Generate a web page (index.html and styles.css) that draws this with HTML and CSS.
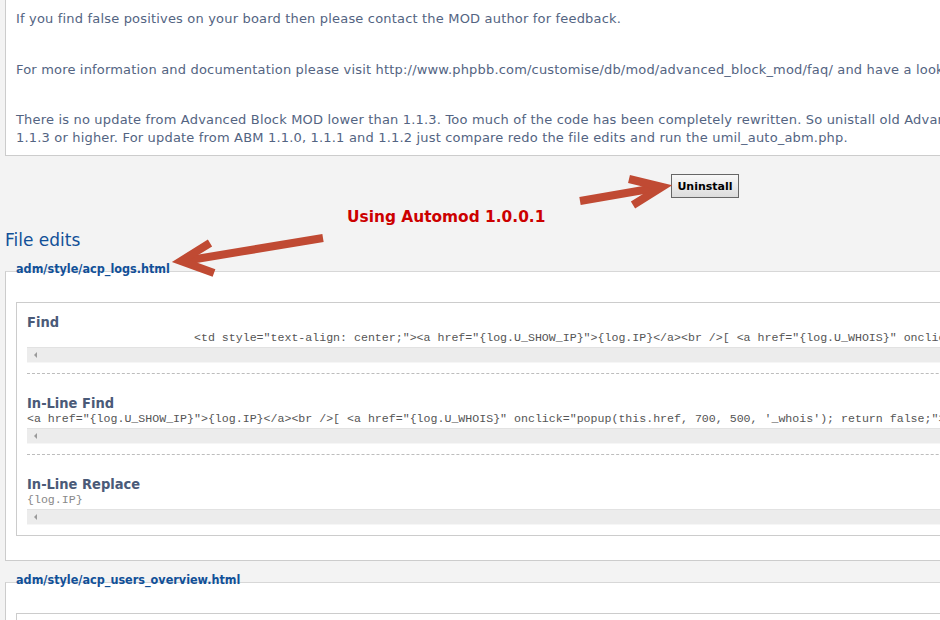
FILE: index.html
```html
<!DOCTYPE html>
<html lang="en">
<head>
<meta charset="utf-8">
<title>Advanced Block MOD - Uninstall</title>
<link rel="stylesheet" href="styles.css">
</head>
<body>
<div class="page">
  <div class="panel">
    <p class="para">If you find false positives on your board then please contact the MOD author for feedback.</p>
    <p class="para">For more information and documentation please visit http://www.phpbb.com/customise/db/mod/advanced_block_mod/faq/ and have a look at the FAQ.</p>
    <p class="para">There is no update from Advanced Block MOD lower than 1.1.3. Too much of the code has been completely rewritten. So unistall old Advanced Block MOD and install<br>1.1.3 or higher. For update from ABM 1.1.0, 1.1.1 and 1.1.2 just compare redo the file edits and run the umil_auto_abm.php.</p>
  </div>

  <div class="actions">
    <button class="btn" type="button">Uninstall</button>
  </div>

  <h2 class="title">File edits</h2>

  <div class="file">
    <div class="legend">adm/style/acp_logs.html</div>
    <div class="file-box">
      <div class="edit">
        <div class="step">
          <h3 class="step-title">Find</h3>
          <div class="code">                        &lt;td style="text-align: center;"&gt;&lt;a href="{log.U_SHOW_IP}"&gt;{log.IP}&lt;/a&gt;&lt;br /&gt;[ &lt;a href="{log.U_WHOIS}" onclick="popup(this.href, 700, 500, '_whois'); return false;"&gt;{L_WHOIS}&lt;/a&gt; ]&lt;/td&gt;</div>
          <div class="scroll"><span class="scroll-arrow"></span></div>
        </div>
        <div class="step">
          <h3 class="step-title">In-Line Find</h3>
          <div class="code">&lt;a href="{log.U_SHOW_IP}"&gt;{log.IP}&lt;/a&gt;&lt;br /&gt;[ &lt;a href="{log.U_WHOIS}" onclick="popup(this.href, 700, 500, '_whois'); return false;"&gt;{L_WHOIS}&lt;/a&gt; ]</div>
          <div class="scroll"><span class="scroll-arrow"></span></div>
        </div>
        <div class="step">
          <h3 class="step-title">In-Line Replace</h3>
          <div class="code code-light">{log.IP}</div>
          <div class="scroll"><span class="scroll-arrow"></span></div>
        </div>
      </div>
    </div>
  </div>

  <div class="file">
    <div class="legend">adm/style/acp_users_overview.html</div>
    <div class="file-box">
      <div class="edit">
        <div class="step">
          <h3 class="step-title">Find</h3>
        </div>
      </div>
    </div>
  </div>
</div>

<div class="note">Using Automod 1.0.0.1</div>
<svg class="arrows" width="940" height="620" viewBox="0 0 940 620" aria-hidden="true">
  <g fill="none" stroke="#c04a33" stroke-width="8" stroke-linejoin="miter" stroke-linecap="butt">
    <path d="M323 238 L184 261"/>
    <path d="M210 243 L181 261 L214 273"/>
    <path d="M580 201 L661 187"/>
    <path d="M629 179 L662 187 L633 205"/>
  </g>
</svg>
</body>
</html>
```
FILE: styles.css
```css
html, body {
  margin: 0;
  padding: 0;
  overflow: hidden;
}

body {
  background: #f3f3f3;
  font-family: "DejaVu Sans", Verdana, sans-serif;
  color: #536482;
  width: 940px;
  height: 620px;
}

.page {
  width: 1400px;
  padding-left: 5px;
}

.panel {
  background: #fff;
  border: 1px solid #cccccc;
  border-top: none;
  padding: 10px 10px 8px;
}

.para {
  margin: 0 0 33px;
  font-size: 13px;
  line-height: 18px;
  letter-spacing: 0.18px;
  white-space: nowrap;
}

.para:nth-child(2) {
  margin-bottom: 32px;
}

.para:last-child {
  margin-bottom: 0;
}

.actions {
  text-align: center;
  margin-top: 18px;
  height: 24px;
}

.btn {
  font-family: "DejaVu Sans", Tahoma, sans-serif;
  font-weight: bold;
  font-size: 11px;
  color: #000;
  height: 24px;
  padding: 0 5px;
  border: 1px solid #666;
  background: linear-gradient(#f8f8f8, #dcdcdc);
  border-radius: 0;
}

.title {
  margin: 32px 0 0;
  font-family: "DejaVu Sans", Tahoma, sans-serif;
  font-weight: normal;
  font-size: 17px;
  line-height: 20px;
  color: #115098;
}

.file {
  margin-top: 11px;
}

.legend {
  position: relative;
  z-index: 1;
  margin: 0 0 -5px 11px;
  font-family: "DejaVu Sans Condensed", "DejaVu Sans", Tahoma, sans-serif;
  font-weight: bold;
  font-size: 12.5px;
  line-height: 15px;
  color: #115098;
}

.file-box {
  background: #fff;
  border: 1px solid #cccccc;
  border-top-color: #d7d7d7;
  padding: 30px 0 24px 10px;
}

.edit {
  border: 1px solid #cccccc;
  padding: 10px 0 10px 10px;
}

.step + .step {
  border-top: 1px dashed #bdbdbd;
  margin-top: 10px;
  padding-top: 20px;
}

.step-title {
  margin: 0;
  font-family: "DejaVu Sans Condensed", "DejaVu Sans", Tahoma, sans-serif;
  font-weight: bold;
  font-size: 14.5px;
  line-height: 18px;
  color: #4a5a78;
}

.code {
  font-family: "Liberation Mono", "Courier New", monospace;
  font-size: 11.6px;
  line-height: 14px;
  color: #555;
  white-space: pre;
  overflow: hidden;
}

.code-light {
  color: #888;
}

.scroll {
  margin-top: 2px;
  height: 14px;
  background: #ececec;
  border-top: 1px solid #e2e2e2;
  border-bottom: 1px solid #f6f6f6;
  display: flex;
  align-items: center;
  padding-left: 7px;
}

.scroll-arrow {
  width: 0;
  height: 0;
  border-top: 3px solid transparent;
  border-bottom: 3px solid transparent;
  border-right: 3px solid #9a9a9a;
}

.note {
  position: absolute;
  left: 347px;
  top: 207px;
  font-family: "DejaVu Sans", Tahoma, sans-serif;
  font-weight: bold;
  font-size: 15.4px;
  line-height: 20px;
  color: #cc0000;
}

.arrows {
  position: absolute;
  left: 0;
  top: 0;
  pointer-events: none;
}
```
